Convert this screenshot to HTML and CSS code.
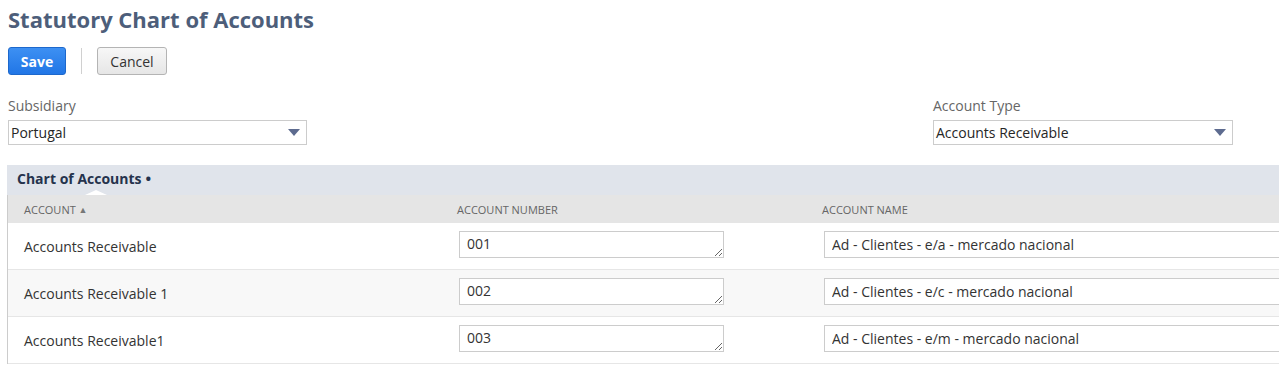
FILE: index.html
```html
<!DOCTYPE html>
<html>
<head>
    <title>Statutory Chart of Accounts</title>
    <link rel="stylesheet" href="styles.css">
</head>
<body>
    <div class="page">
        <h1 class="page-title">Statutory Chart of Accounts</h1>

        <div class="toolbar">
            <button type="button" class="btn btn-primary">Save</button>
            <span class="toolbar-sep"></span>
            <button type="button" class="btn btn-secondary">Cancel</button>
        </div>

        <div class="filters">
            <div class="field">
                <label class="field-label">Subsidiary</label>
                <div class="dropdown">
                    <span class="dropdown-value">Portugal</span>
                    <svg class="dropdown-arrow" width="12" height="7" viewBox="0 0 12 7"><path d="M0 0 H12 L6 7 Z" fill="#5d6b8f"/></svg>
                </div>
            </div>
            <div class="field">
                <label class="field-label">Account Type</label>
                <div class="dropdown">
                    <span class="dropdown-value">Accounts Receivable</span>
                    <svg class="dropdown-arrow" width="12" height="7" viewBox="0 0 12 7"><path d="M0 0 H12 L6 7 Z" fill="#5d6b8f"/></svg>
                </div>
            </div>
        </div>

        <div class="sublist">
            <div class="sublist-tab">
                <span class="tab-title">Chart of Accounts</span><span class="tab-mark">&bull;</span>
                <span class="tab-pointer"></span>
            </div>
            <div class="sublist-grid">
                <div class="grid-head">
                    <div class="head-cell">Account <span class="sort-arrow">&#9650;</span></div>
                    <div class="head-cell">Account Number</div>
                    <div class="head-cell">Account Name</div>
                </div>

                <div class="grid-row">
                    <div class="cell cell-text">Accounts Receivable</div>
                    <div class="cell"><textarea class="num-input" rows="1">001</textarea></div>
                    <div class="cell"><input class="name-input" type="text" value="Ad - Clientes - e/a - mercado nacional"></div>
                </div>
                <div class="grid-row grid-row-alt">
                    <div class="cell cell-text">Accounts Receivable 1</div>
                    <div class="cell"><textarea class="num-input" rows="1">002</textarea></div>
                    <div class="cell"><input class="name-input" type="text" value="Ad - Clientes - e/c - mercado nacional"></div>
                </div>
                <div class="grid-row">
                    <div class="cell cell-text">Accounts Receivable1</div>
                    <div class="cell"><textarea class="num-input" rows="1">003</textarea></div>
                    <div class="cell"><input class="name-input" type="text" value="Ad - Clientes - e/m - mercado nacional"></div>
                </div>
            </div>
        </div>
    </div>
</body>
</html>
```

FILE: styles.css
```css
/* Page */
body {
    margin: 0;
    font-family: "Open Sans", Arial, sans-serif;
    color: #333;
    background: #fff;
    overflow: hidden;
}

.page {
    padding: 0 8px;
    width: 1320px;
}

.page-title {
    margin: 0;
    padding-top: 4px;
    font-size: 22px;
    line-height: 30px;
    font-weight: bold;
    color: #4d5e7a;
}

/* Buttons */
.toolbar {
    display: flex;
    align-items: center;
    margin-top: 13px;
    height: 28px;
}

.btn {
    height: 28px;
    border-radius: 3px;
    font-family: inherit;
    font-size: 14px;
    padding: 0;
    cursor: pointer;
}

.btn-primary {
    width: 58px;
    color: #fff;
    font-weight: bold;
    border: 1px solid #1d68cc;
    background: linear-gradient(#3d90f3, #2176e6);
}

.btn-secondary {
    width: 70px;
    color: #333;
    border: 1px solid #b4b4b4;
    background: linear-gradient(#f7f7f7, #e6e6e6);
}

.toolbar-sep {
    width: 1px;
    height: 26px;
    background: #d0d0d0;
    margin: 0 15px;
}

/* Filter fields */
.filters {
    display: grid;
    grid-template-columns: 925px 300px;
    margin-top: 20px;
}

.field-label {
    display: block;
    font-size: 14px;
    line-height: 20px;
    color: #666;
    margin-bottom: 5px;
    padding-top: 1px;
}

.dropdown {
    display: flex;
    align-items: center;
    justify-content: space-between;
    width: 299px;
    height: 25px;
    box-sizing: border-box;
    border: 1px solid #ccc;
    padding: 0 6px 0 2px;
    background: #fff;
    margin-top: -1px;
}

.field:last-child .dropdown {
    width: 300px;
}

.dropdown-value {
    font-size: 14px;
    color: #262626;
}

/* Sublist */
.sublist {
    margin-top: 20px;
    margin-left: -1px;
}

.sublist-tab {
    position: relative;
    height: 26px;
    padding: 0 0 4px 10px;
    background: #e0e4eb;
    line-height: 26px;
}

.tab-title {
    font-size: 14px;
    font-weight: bold;
    color: #25334d;
}

.tab-mark {
    font-size: 15px;
    font-weight: bold;
    color: #25334d;
    margin-left: 4px;
}

.tab-pointer {
    position: absolute;
    left: 78px;
    bottom: 0;
    width: 0;
    height: 0;
    border-left: 11px solid transparent;
    border-right: 11px solid transparent;
    border-bottom: 5px solid #fff;
}

.sublist-grid {
    border-left: 1px solid #ccc;
}

.grid-head,
.grid-row {
    display: grid;
    grid-template-columns: 433px 365px 1fr;
}

.grid-head {
    height: 28px;
    align-items: center;
    background: #e5e5e5;
}

.head-cell {
    padding-left: 16px;
    font-size: 11px;
    text-transform: uppercase;
    color: #666;
}

.sort-arrow {
    font-size: 9px;
    color: #777;
    vertical-align: 1px;
}

.grid-row {
    align-items: center;
    padding: 8px 0 11px;
    border-bottom: 1px solid #e6e6e6;
    background: #fff;
}

.grid-row-alt {
    background: #f8f8f8;
}

.cell {
    padding-left: 16px;
    display: flex;
}

.cell-text {
    font-size: 14px;
    color: #333;
    padding-top: 4px;
}

.num-input,
.name-input {
    height: 27px;
    box-sizing: border-box;
    border: 1px solid #ccc;
    font-family: inherit;
    font-size: 14px;
    color: #333;
    background: #fff;
    margin-left: 2px;
    padding: 2px 7px;
}

.num-input {
    width: 265px;
    resize: vertical;
    overflow: hidden;
    line-height: 20px;
}

.name-input {
    width: 470px;
    padding-top: 0;
    padding-bottom: 0;
}
```
